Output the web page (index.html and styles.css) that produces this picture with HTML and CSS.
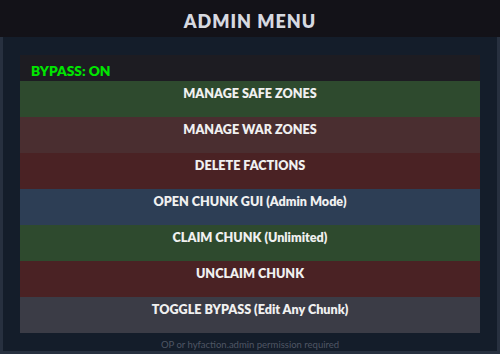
FILE: index.html
```html
<!DOCTYPE html>
<html lang="en">
<head>
  <meta charset="UTF-8" />
  <title>Admin Menu</title>
  <link rel="stylesheet" href="styles.css">
</head>
<body>
  <div class="menu-header">
    <h1>ADMIN MENU</h1>
  </div>

  <div class="menu-panel">
    <div class="menu-box">
      <div class="bypass-status">BYPASS: ON</div>
      <button class="menu-btn green">MANAGE SAFE ZONES</button>
      <button class="menu-btn rose">MANAGE WAR ZONES</button>
      <button class="menu-btn red">DELETE FACTIONS</button>
      <button class="menu-btn blue">OPEN CHUNK GUI (Admin Mode)</button>
      <button class="menu-btn green">CLAIM CHUNK (Unlimited)</button>
      <button class="menu-btn red">UNCLAIM CHUNK</button>
      <button class="menu-btn grey">TOGGLE BYPASS (Edit Any Chunk)</button>
    </div>
    <p class="menu-footer">OP or hyfaction.admin permission required</p>
  </div>
</body>
</html>
```

FILE: styles.css
```css
* {
  margin: 0;
  padding: 0;
  box-sizing: border-box;
}

:root {
  --fundo: #131218;
  --painel: #141d2a;
  --borda: #27303f;
  --texto: #f0f0f0;
  --verde: #2e4a2e;
  --rosa: #4a2e30;
  --vermelho: #4a2224;
  --azul: #2d3e55;
  --cinza: #3b3c46;
}

body {
  font-family: Lato, "Noto Sans", sans-serif;
  background-color: var(--fundo);
  width: 500px;
  height: 354px;
  overflow: hidden;
}

.menu-header {
  height: 37px;
  display: flex;
  align-items: center;
  justify-content: center;
  padding-top: 4px;
}

.menu-header h1 {
  color: #d6d9e0;
  font-size: 18px;
  font-weight: 800;
  letter-spacing: 1px;
}

.menu-panel {
  height: 317px;
  background-color: var(--painel);
  border: 3px solid var(--borda);
  border-top: none;
  padding: 18px 17px 0;
}

.menu-box {
  display: flex;
  flex-direction: column;
}

.bypass-status {
  height: 26px;
  background-color: #1d1c22;
  color: #00e600;
  font-size: 13.7px;
  font-weight: 800;
  padding: 8px 11px 0;
  line-height: 15px;
}

.menu-btn {
  height: 36px;
  border: none;
  color: var(--texto);
  font-family: inherit;
  font-size: 12.6px;
  font-weight: 800;
  text-align: center;
  padding-top: 5px;
  display: flex;
  justify-content: center;
  align-items: flex-start;
}

.menu-btn.green { background-color: var(--verde); }
.menu-btn.rose { background-color: var(--rosa); }
.menu-btn.red { background-color: var(--vermelho); }
.menu-btn.blue { background-color: var(--azul); }
.menu-btn.grey { background-color: var(--cinza); }

.menu-footer {
  color: #4f5664;
  font-size: 9.5px;
  text-align: center;
  margin-top: 6px;
}
```
